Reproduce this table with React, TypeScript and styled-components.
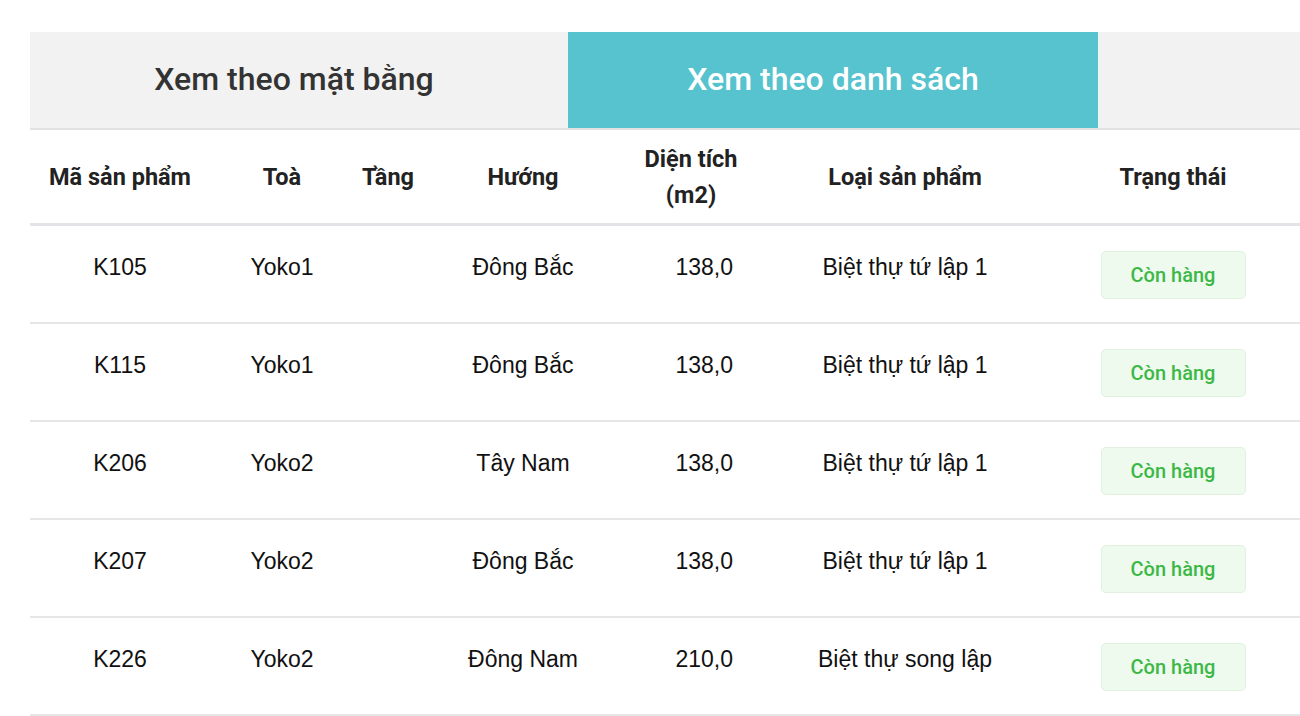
import React from "react";
import styled, { createGlobalStyle } from "styled-components";

const GlobalStyle = createGlobalStyle`
  html, body {
    margin: 0;
    padding: 0;
    background: #ffffff;
    overflow: hidden;
  }
  body {
    font-family: "Liberation Sans", Arial, sans-serif;
  }
`;

type Product = {
  code: string;
  block: string;
  floor: string;
  direction: string;
  area: string;
  kind: string;
  status: string;
};

const products: Array<Product> = [
  { code: "K105", block: "Yoko1", floor: "", direction: "Đông Bắc", area: "138,0", kind: "Biệt thự tứ lập 1", status: "Còn hàng" },
  { code: "K115", block: "Yoko1", floor: "", direction: "Đông Bắc", area: "138,0", kind: "Biệt thự tứ lập 1", status: "Còn hàng" },
  { code: "K206", block: "Yoko2", floor: "", direction: "Tây Nam", area: "138,0", kind: "Biệt thự tứ lập 1", status: "Còn hàng" },
  { code: "K207", block: "Yoko2", floor: "", direction: "Đông Bắc", area: "138,0", kind: "Biệt thự tứ lập 1", status: "Còn hàng" },
  { code: "K226", block: "Yoko2", floor: "", direction: "Đông Nam", area: "210,0", kind: "Biệt thự song lập", status: "Còn hàng" },
];

const COLUMNS = "180px 144px 68px 202px 134px 294px 242px";

export default function App() {
  return (
    <>
      <GlobalStyle />
      <Page>
        <Tabs>
          <Tab>Xem theo mặt bằng</Tab>
          <Tab active>Xem theo danh sách</Tab>
          <TabFiller />
        </Tabs>
        <HeadRow>
          <HeadCell>Mã sản phẩm</HeadCell>
          <HeadCell>Toà</HeadCell>
          <HeadCell>Tầng</HeadCell>
          <HeadCell>Hướng</HeadCell>
          <HeadCell>
            Diện tích
            <br />
            (m2)
          </HeadCell>
          <HeadCell>Loại sản phẩm</HeadCell>
          <HeadCell>Trạng thái</HeadCell>
        </HeadRow>
        {products.map((p) => (
          <Row key={p.code}>
            <Cell>{p.code}</Cell>
            <Cell>{p.block}</Cell>
            <Cell>{p.floor}</Cell>
            <Cell>{p.direction}</Cell>
            <Cell align="right">{p.area}</Cell>
            <Cell>{p.kind}</Cell>
            <StatusCell>
              <Badge>{p.status}</Badge>
            </StatusCell>
          </Row>
        ))}
      </Page>
    </>
  );
}

const Page = styled.div`
  margin: 32px 0 0 30px;
  width: 1290px;
`;

const Tabs = styled.div`
  display: flex;
  height: 96px;
  background: #f2f2f2;
  border-bottom: 2px solid #e2e2e4;
`;

const Tab = styled.div<{ active?: boolean }>`
  display: flex;
  align-items: center;
  justify-content: center;
  box-sizing: border-box;
  width: ${({ active }) => (active ? "530px" : "538px")};
  padding: ${({ active }) => (active ? "0 0 2px 0" : "0 10px 2px 0")};
  background: ${({ active }) => (active ? "#56c3ce" : "#f2f2f2")};
  color: ${({ active }) => (active ? "#ffffff" : "#333333")};
  font-family: Roboto, "Noto Sans", sans-serif;
  font-weight: 500;
  font-size: 32px;
`;

const TabFiller = styled.div`
  flex: 1;
`;

const HeadRow = styled.div`
  display: grid;
  grid-template-columns: ${COLUMNS};
  height: 93px;
  border-bottom: 3px solid #e3e3e8;
`;

const HeadCell = styled.div`
  display: flex;
  align-items: center;
  justify-content: center;
  text-align: center;
  font-family: Roboto, "Noto Sans", sans-serif;
  font-weight: 700;
  font-size: 23.5px;
  line-height: 36px;
  color: #222222;
`;

const Row = styled.div`
  display: grid;
  grid-template-columns: ${COLUMNS};
  height: 96px;
  border-bottom: 2px solid #e6e6e6;
`;

const Cell = styled.div<{ align?: "right" | "center" }>`
  padding-top: 28px;
  padding-right: ${({ align }) => (align === "right" ? "25px" : "0")};
  text-align: ${({ align }) => align ?? "center"};
  font-size: 23px;
  line-height: 26px;
  color: #111111;
`;

const StatusCell = styled.div`
  display: flex;
  justify-content: center;
  align-items: flex-start;
  padding-top: 25px;
`;

const Badge = styled.div`
  display: flex;
  align-items: center;
  justify-content: center;
  width: 145px;
  height: 48px;
  box-sizing: border-box;
  background: #effaee;
  border: 1px solid #e0f1df;
  border-radius: 5px;
  color: #3cb846;
  font-family: Roboto, "Noto Sans", sans-serif;
  font-weight: 500;
  font-size: 20px;
`;
